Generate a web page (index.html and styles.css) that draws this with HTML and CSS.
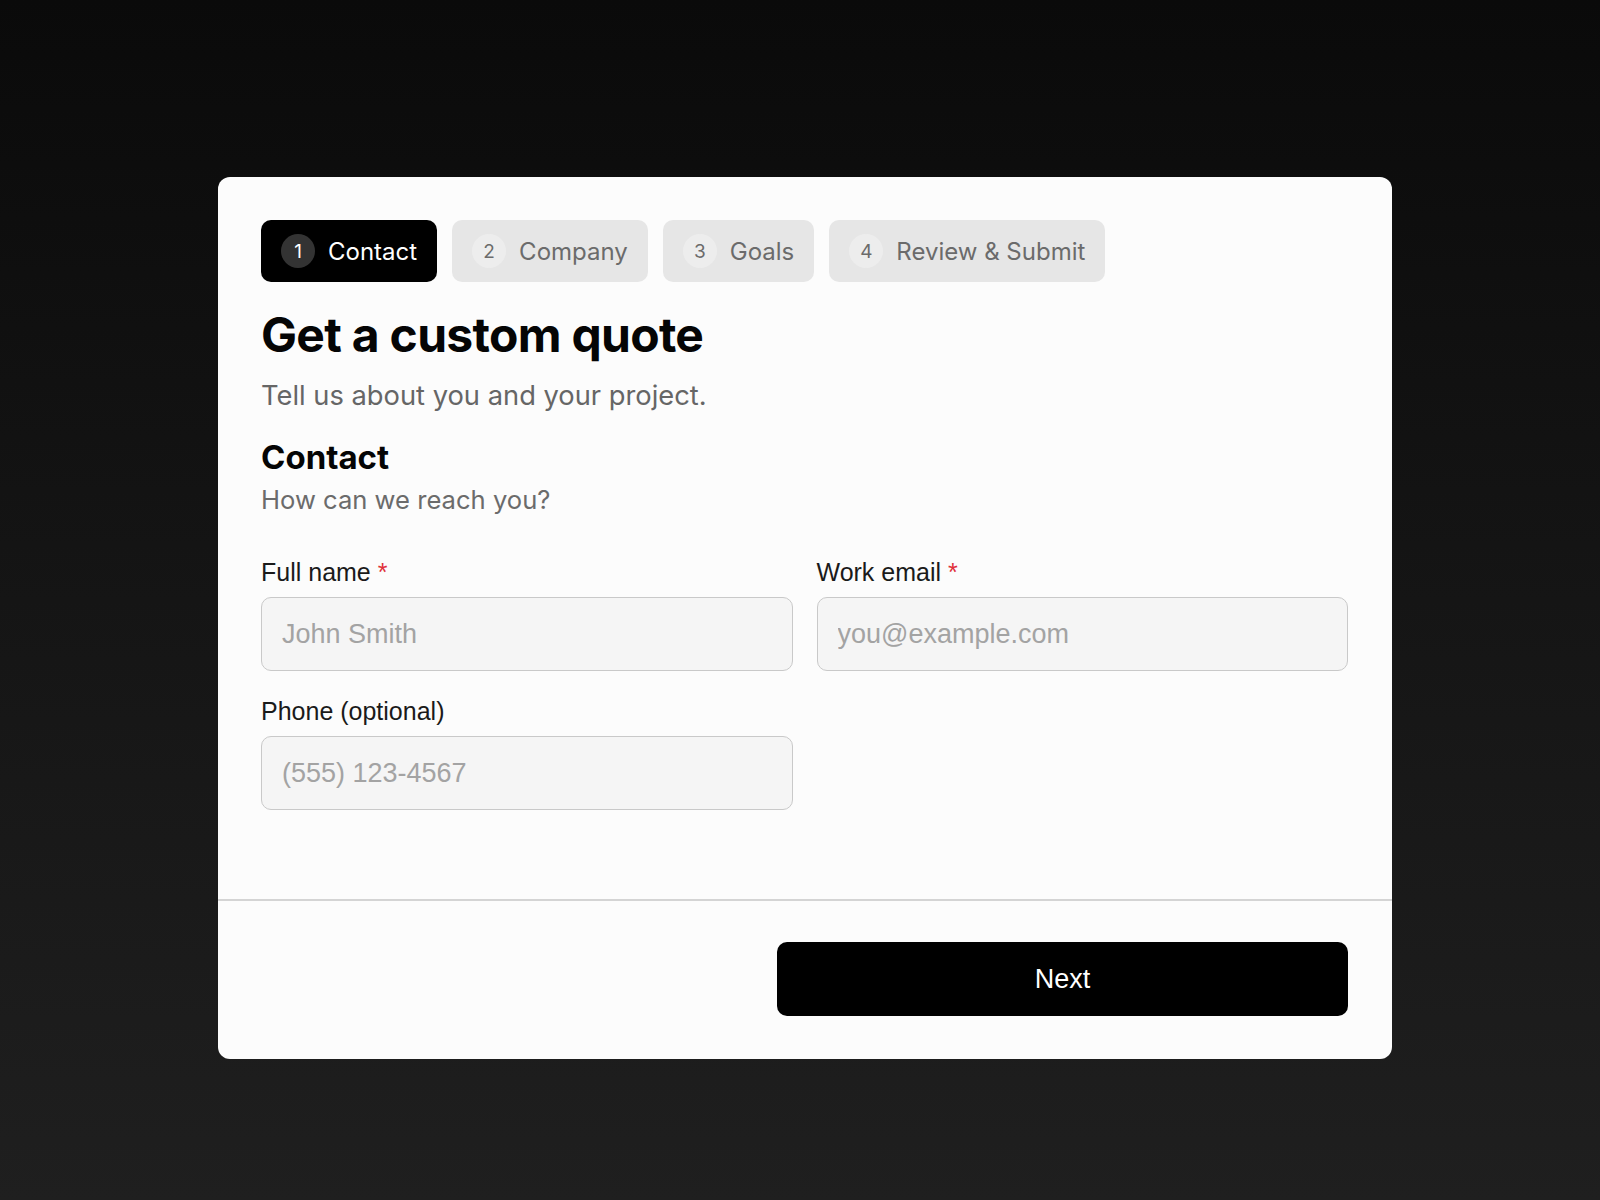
FILE: index.html
```html
<!DOCTYPE html>
<html lang="en">
<head>
<meta charset="utf-8">
<title>Get a custom quote</title>
<link rel="stylesheet" href="styles.css">
</head>
<body>
<div class="page">
  <form class="card">
    <div class="card-body">
      <ol class="steps">
        <li class="step active"><span class="num">1</span><span class="step-label">Contact</span></li>
        <li class="step"><span class="num">2</span><span class="step-label">Company</span></li>
        <li class="step"><span class="num">3</span><span class="step-label">Goals</span></li>
        <li class="step"><span class="num">4</span><span class="step-label">Review &amp; Submit</span></li>
      </ol>
      <h1 class="title">Get a custom quote</h1>
      <p class="subtitle">Tell us about you and your project.</p>
      <h2 class="section-title">Contact</h2>
      <p class="section-sub">How can we reach you?</p>
      <div class="fields">
        <label class="field">
          <span class="label">Full name <span class="req">*</span></span>
          <input class="input" type="text" placeholder="John Smith">
        </label>
        <label class="field">
          <span class="label">Work email <span class="req">*</span></span>
          <input class="input" type="email" placeholder="you@example.com">
        </label>
        <label class="field">
          <span class="label">Phone (optional)</span>
          <input class="input" type="tel" placeholder="(555) 123-4567">
        </label>
      </div>
    </div>
    <div class="card-footer">
      <button class="btn-next" type="button">Next</button>
    </div>
  </form>
</div>
</body>
</html>
```

FILE: styles.css
```css
* { box-sizing: border-box; }
html, body { margin: 0; padding: 0; }
body {
  min-height: 100vh;
  background: linear-gradient(180deg, #0a0a0a 0%, #151515 50%, #1f1f1f 100%);
  font-family: Inter, "Liberation Sans", sans-serif;
}
.page {
  padding: 177px 0 0 218px;
}
.card {
  width: 1174px;
  background: #fcfcfc;
  border-radius: 12px;
  overflow: hidden;
}
.card-body {
  padding: 43px 44px 89px 43px;
}
.steps {
  list-style: none;
  margin: 0;
  padding: 0;
  display: flex;
  gap: 15px;
}
.step {
  display: flex;
  align-items: center;
  gap: 13px;
  height: 62px;
  padding: 0 20px;
  border-radius: 10px;
  background: #e6e6e6;
  color: #6b6b6b;
  font-size: 24px;
}
.step .num {
  width: 34px;
  height: 34px;
  border-radius: 50%;
  background: #ededed;
  display: flex;
  align-items: center;
  justify-content: center;
  font-size: 19px;
}
.step.active {
  background: #000;
  color: #fff;
}
.step.active .num {
  background: #333;
  color: #fff;
}
.title {
  margin: 24px 0 0;
  font-size: 48px;
  line-height: 58px;
  font-weight: 700;
  letter-spacing: -0.7px;
  color: #050505;
}
.subtitle {
  margin: 14px 0 0;
  font-size: 27.3px;
  line-height: 36px;
  color: #666;
}
.section-title {
  margin: 24px 0 0;
  font-size: 33px;
  line-height: 38px;
  font-weight: 700;
  color: #050505;
}
.section-sub {
  margin: 6px 0 0;
  font-size: 25.6px;
  line-height: 36px;
  color: #6b6b6b;
}
.fields {
  margin-top: 36px;
  display: grid;
  grid-template-columns: 1fr 1fr;
  column-gap: 24px;
  row-gap: 22px;
}
.field {
  display: flex;
  flex-direction: column;
  gap: 7px;
}
.label {
  font-family: "Liberation Sans", Arial, sans-serif;
  font-size: 25px;
  line-height: 36px;
  color: #1a1a1a;
}
.req { color: #e0303a; }
.input {
  height: 74px;
  padding: 0 20px;
  border: 1.5px solid #c9c9c9;
  border-radius: 10px;
  background: #f5f5f5;
  font-family: "Liberation Sans", Arial, sans-serif;
  font-size: 27px;
  color: #222;
  outline: none;
}
.input::placeholder { color: #a3a3a3; }
.card-footer {
  border-top: 2px solid #d4d4d4;
  padding: 41px 44px 43px;
  display: flex;
  justify-content: flex-end;
}
.btn-next {
  width: 571px;
  height: 74px;
  border: 0;
  border-radius: 10px;
  background: #000;
  color: #fff;
  font-family: "Liberation Sans", Arial, sans-serif;
  font-size: 27px;
  cursor: pointer;
}
```
